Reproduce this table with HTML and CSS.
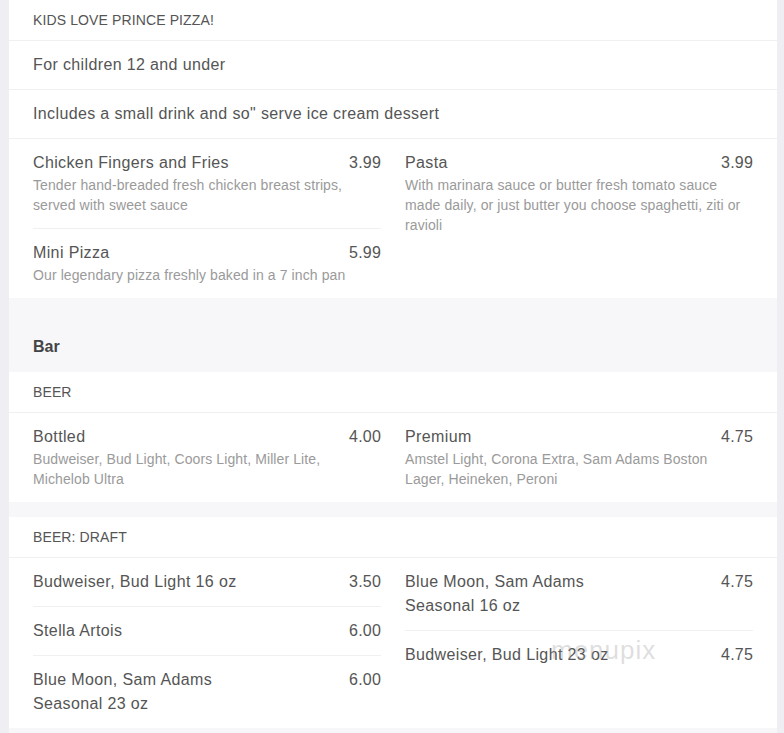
FILE: index.html
```html
<!DOCTYPE html>
<html>
<head>
<meta charset="utf-8">
<link rel="stylesheet" href="styles.css">
</head>
<body>
<div class="page">
  <section class="card">
    <div class="cat-head">KIDS LOVE PRINCE PIZZA!</div>
    <div class="info">For children 12 and under</div>
    <div class="info">Includes a small drink and so" serve ice cream dessert</div>
    <div class="grid">
      <div class="col">
        <div class="item">
          <div class="row"><span class="name">Chicken Fingers and Fries</span><span class="price">3.99</span></div>
          <div class="desc">Tender hand-breaded fresh chicken breast strips, served with sweet sauce</div>
        </div>
        <div class="item">
          <div class="row"><span class="name">Mini Pizza</span><span class="price">5.99</span></div>
          <div class="desc">Our legendary pizza freshly baked in a 7 inch pan</div>
        </div>
      </div>
      <div class="col">
        <div class="item">
          <div class="row"><span class="name">Pasta</span><span class="price">3.99</span></div>
          <div class="desc">With marinara sauce or butter fresh tomato sauce made daily, or just butter you choose spaghetti, ziti or ravioli</div>
        </div>
      </div>
    </div>
  </section>

  <h2 class="section-title">Bar</h2>

  <section class="card">
    <div class="cat-head">BEER</div>
    <div class="grid">
      <div class="col">
        <div class="item">
          <div class="row"><span class="name">Bottled</span><span class="price">4.00</span></div>
          <div class="desc">Budweiser, Bud Light, Coors Light, Miller Lite, Michelob Ultra</div>
        </div>
      </div>
      <div class="col">
        <div class="item">
          <div class="row"><span class="name">Premium</span><span class="price">4.75</span></div>
          <div class="desc">Amstel Light, Corona Extra, Sam Adams Boston Lager, Heineken, Peroni</div>
        </div>
      </div>
    </div>
  </section>

  <section class="card draft">
    <div class="cat-head">BEER: DRAFT</div>
    <div class="grid">
      <div class="col">
        <div class="item">
          <div class="row"><span class="name">Budweiser, Bud Light 16 oz</span><span class="price">3.50</span></div>
        </div>
        <div class="item">
          <div class="row"><span class="name">Stella Artois</span><span class="price">6.00</span></div>
        </div>
        <div class="item">
          <div class="row"><span class="name narrow">Blue Moon, Sam Adams Seasonal 23 oz</span><span class="price">6.00</span></div>
        </div>
      </div>
      <div class="col">
        <div class="item">
          <div class="row"><span class="name narrow">Blue Moon, Sam Adams Seasonal 16 oz</span><span class="price">4.75</span></div>
        </div>
        <div class="item">
          <div class="row"><span class="name">Budweiser, Bud Light 23 oz</span><span class="price">4.75</span></div>
        </div>
      </div>
    </div>
    <span class="watermark">menupix</span>
  </section>
</div>
</body>
</html>
```

FILE: styles.css
```css
html, body {
  margin: 0;
  padding: 0;
}
body {
  background: #eeeef3;
  font-family: "Liberation Sans", Arial, sans-serif;
  color: #555;
}
.page {
  margin: 0 7px 0 9px;
  background: #f7f7fa;
  padding-bottom: 8px;
}
.card {
  background: #fff;
  position: relative;
}
.cat-head {
  padding: 10px 24px;
  line-height: 20px;
  font-size: 14px;
  letter-spacing: 0.12px;
  color: #555;
  border-bottom: 1px solid #f0f0f3;
}
.info {
  padding: 12px 24px;
  line-height: 24px;
  font-size: 16px;
  letter-spacing: 0.37px;
  color: #555;
  border-bottom: 1px solid #f0f0f3;
}
.grid {
  display: grid;
  grid-template-columns: 1fr 1fr;
  column-gap: 24px;
  padding: 0 24px;
}
.item {
  padding: 12px 0;
  border-bottom: 1px solid #f0f0f3;
}
.item:last-child {
  border-bottom: none;
}
.row {
  display: flex;
  justify-content: space-between;
  align-items: flex-start;
  font-size: 16px;
  line-height: 24px;
  letter-spacing: 0.37px;
  color: #555;
}
.name.narrow {
  max-width: 210px;
}
.price {
  flex: none;
  margin-left: 16px;
  letter-spacing: 0.2px;
}
.desc {
  font-size: 14px;
  line-height: 20px;
  letter-spacing: 0.1px;
  color: #9a9a9a;
  padding-right: 8px;
  margin-bottom: 1px;
}
.section-title {
  margin: 0;
  padding: 37px 24px 13px;
  font-size: 16px;
  line-height: 24px;
  font-weight: bold;
  color: #444;
}
.draft {
  margin-top: 15px;
}
.watermark {
  position: absolute;
  left: 542px;
  top: 118px;
  font-size: 26px;
  line-height: 30px;
  letter-spacing: 1px;
  color: rgba(160, 160, 160, 0.35);
  pointer-events: none;
}
```
